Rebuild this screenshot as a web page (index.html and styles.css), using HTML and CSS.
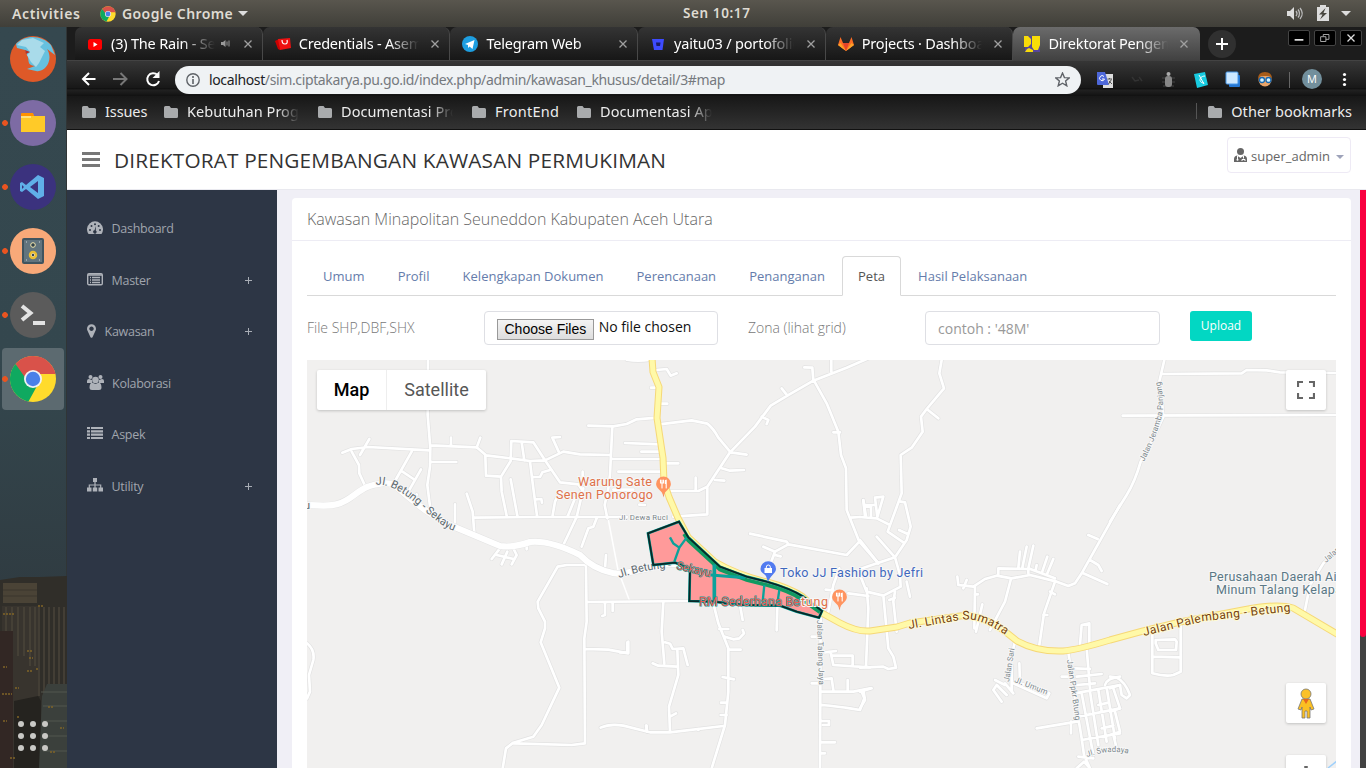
FILE: index.html
```html
<!DOCTYPE html>
<html lang="id">
<head>
<meta charset="utf-8">
<title>Direktorat Pengembangan Kawasan Permukiman</title>
<link rel="stylesheet" href="styles.css">
</head>
<body>
<svg width="0" height="0" class="sprite">
  <defs>
    <symbol id="chrome" viewBox="0 0 48 48"><circle cx="24" cy="24" r="23" fill="#ffdb2c"/><path d="M6.5 9A23 23 0 0 1 46.5 19H24L15 27Z" fill="#d9524a"/><path d="M6.5 9A23 23 0 0 0 19.5 46.5L28 31L20 28Z" fill="#0fa960"/><circle cx="24" cy="24" r="9" fill="#f2f2f2"/><circle cx="24" cy="24" r="7.2" fill="#4a80e8"/></symbol>
    <symbol id="folder" viewBox="0 0 14 12"><path d="M1.5 0H5.5L7 2H12.5Q14 2 14 3.5V10.5Q14 12 12.5 12H1.5Q0 12 0 10.5V1.5Q0 0 1.5 0Z" fill="#a9abad"/></symbol>
    <symbol id="close" viewBox="0 0 8 8"><path d="M.5 .5L7.5 7.5M7.5 .5L.5 7.5" stroke="#a0a0a0" stroke-width="1.3"/></symbol>
    <symbol id="food" viewBox="0 0 16 22"><path d="M8 21.5L6.2 14H9.8Z" fill="#e98b63"/><path d="M8 .5A7.4 7.4 0 0 1 15.4 8C15.4 12.5 10 14 8 19.5C6 14 .6 12.5 .6 8A7.4 7.4 0 0 1 8 .5Z" fill="#ff9460"/><path d="M5 4V7M6.5 4V12M8 4V7M5 7H8M10.7 4V12M10.8 4.5H9.8V7.5" stroke="#fff" stroke-width="1.1" fill="none"/></symbol>
  </defs>
</svg>
<header class="topbar">
  <span class="activities">Activities</span>
  <svg class="app-icon"><use href="#chrome"/></svg>
  <span class="app-name">Google Chrome</span><i class="caret light"></i>
  <span class="clock">Sen 10:17</span>
  <svg class="status" viewBox="0 0 66 18"><path d="M0 6H3L7 2V15L3 11H0Z" fill="#ddd"/><path d="M9 6Q11 8.500 9 11M11 4.500Q14 8.500 11 12.500M13 3Q17.500 8.500 13 14" fill="none" stroke="#bbb" stroke-width="1.3"/><path d="M30 2H33V0H39V2H42V16H30Z" fill="#ddd"/><path d="M38.500 3L32 9.500H35.500L33 14.500L40 8H36.500Z" fill="#48463f"/><path d="M54 6H64L59 11Z" fill="#ddd"/></svg>
</header>
<div class="desktop">
  <aside class="dock">
    <svg class="city" viewBox="0 0 67 192"><path d="M0 4L20 1H40L67 0V192H0Z" fill="#302e29"/><path d="M3 7H37V27H3Z" fill="#4a4336"/><path d="M3 14H37M3 20H37" stroke="#3b362c"/><path d="M2 30H38V192H2Z" fill="#38342e"/><path d="M39 31V120M44 31V120M49 31V120M54 31V120M59 31V110M64 31V110M6 31V55M12 31V55M18 31V80M24 31V80M30 31V90M35 31V90" stroke="#49443a" stroke-width="1.500"/><path d="M0 55L13 55V192H0Z" fill="#322724"/><path d="M14 125L38 120L41 125V192H14Z" fill="#25231f"/><path d="M42 120L47 108H67V192H39Z" fill="#3b403c"/><path d="M41 116H67M43 130H67M43 145H67M43 160H67M43 175H67" stroke="#52564e"/><path d="M3 38h12M2 118h10M3 91h4M27 75h5M29 82h4M36 93h3M15 112h4M17 141h2M48 131h6M60 152h4M27 95h5M50 176h6M10 182h6M3 145h4M38 30h6" stroke="#806427" stroke-width="1.500" stroke-dasharray="2 1"/></svg>
    <div class="launchers">
      <svg viewBox="0 0 48 48"><circle cx="24" cy="24" r="23" fill="#de5928"/><path d="M7 9C17-2 34 1 42 10L46 20L38 14C45 25 36 38 27 36L18 34L26 31C17 30 21 25 18 20L16 15L8 13Z" fill="#66c1df"/><path d="M13 5L24 3L35 8L31 12L36 16L30 28L27 32L22 27L18 20L21 17L17 12L8 10Z" fill="#a9dbea"/><path d="M16 15l5 2-4 2z" fill="#b63127"/></svg>
      <svg viewBox="0 0 48 48"><circle cx="24" cy="24" r="23" fill="#7d6ba4"/><path d="M12 15H24L25 17H36V33H12Z" fill="#ffca28"/><path d="M12 17V15Q12 14 13 14H24L25 17Z" fill="#ff9100"/><path d="M12 18H22" stroke="#fff6cf"/></svg>
      <svg viewBox="0 0 48 48"><circle cx="24" cy="24" r="23" fill="#3b327e"/><path fill-rule="evenodd" d="M29 12L35 15V33L29 36L17 26L13 29L11 28V20L13 19L17 22ZM29 18L21 24L29 30ZM13 22V26L15 24Z" fill="#60afe8"/></svg>
      <svg viewBox="0 0 48 48"><circle cx="24" cy="24" r="23" fill="#f8a979"/><rect x="13" y="11" width="22" height="26" rx="2" fill="#40545f"/><rect x="15" y="13" width="18" height="22" fill="#62747e"/><circle cx="24" cy="18" r="2.300" fill="#30414b" stroke="#f6e9b0"/><circle cx="24" cy="28" r="3" fill="#eee" stroke="#e9bd32" stroke-width="2.500"/><circle cx="24" cy="28" r="1.200" fill="#345"/><path d="M17 15h1M30 15h1M17 33h1M30 33h1" stroke="#ccd4d8"/></svg>
      <svg viewBox="0 0 48 48"><circle cx="24" cy="24" r="23" fill="#5b5b5b"/><path d="M13 15L21.500 22L13 29" fill="none" stroke="#e3e3e3" stroke-width="4"/><path d="M24 32H36" stroke="#e3e3e3" stroke-width="4"/></svg>
      <svg class="current"><use href="#chrome"/></svg>
    </div>
    <svg class="apps" viewBox="0 0 30 30"><g fill="#c9c8c5"><circle cx="3" cy="3" r="3"/><circle cx="15" cy="3" r="3"/><circle cx="27" cy="3" r="3"/><circle cx="3" cy="15" r="3"/><circle cx="15" cy="15" r="3"/><circle cx="27" cy="15" r="3"/><circle cx="3" cy="27" r="3"/><circle cx="15" cy="27" r="3"/><circle cx="27" cy="27" r="3"/></g></svg>
  </aside>
  <div class="browser">
    <div class="tabs">
      <div class="tab first"><svg viewBox="0 0 16 16"><rect x="1" y="3" width="14" height="11" rx="2.500" fill="#f00"/><path d="M6.500 6L10.500 8.500L6.500 11Z" fill="#fff"/></svg><span class="short">(3) The Rain - Seven</span><svg class="sound" viewBox="0 0 10 8"><path d="M0 2.500H2L4.500 .500V7.500L2 5.500H0Z" fill="#999"/><path d="M6 2V6M8 1V7" stroke="#999"/></svg><svg class="x"><use href="#close"/></svg></div>
      <div class="tab"><svg viewBox="0 0 16 16"><path d="M0 5L4 3L5 14L3 13Z" fill="#c00"/><path d="M3 3L15 2L16 12L5 14Z" fill="#e11"/><path d="M7 4Q7 8 10 8T12 4" fill="none" stroke="#fff" stroke-width="1.200"/></svg><span>Credentials - Asemka</span><svg class="x"><use href="#close"/></svg></div>
      <div class="tab"><svg viewBox="0 0 16 16"><circle cx="8" cy="8" r="8" fill="#1e9ee0"/><path d="M3 8L12.500 4L10.500 13L7.500 10.500L6 12V9Z" fill="#fff"/></svg><span>Telegram Web</span><svg class="x"><use href="#close"/></svg></div>
      <div class="tab"><svg viewBox="0 0 16 16"><path d="M2 3H14L12.500 14H4Z" fill="#3d4bff"/><path d="M6 6.500H10.500L10 10H6.500Z" fill="#1b1c66"/></svg><span>yaitu03 / portofolio</span><svg class="x"><use href="#close"/></svg></div>
      <div class="tab"><svg viewBox="0 0 16 16"><path d="M8 15L0 9L2.500 1L5 7H11L13.500 1L16 9Z" fill="#fc6d26"/><path d="M8 15L5 7H11Z" fill="#e24329"/><path d="M0 9L2.500 7L8 15Z M16 9L13.500 7L8 15Z" fill="#fca326"/></svg><span>Projects · Dashboard</span><svg class="x"><use href="#close"/></svg></div>
      <div class="tab active"><svg viewBox="0 0 16 16"><path d="M0 0H16V16H1V11H0Z" fill="#56469a"/><path d="M0 0H4L7 3V8L4 11H0ZM8 0H16V9L14 14H10L8 11ZM1 16L3 13L5 12L9 14V16Z" fill="#f8dc09"/></svg><span>Direktorat Pengembangan</span><svg class="x"><use href="#close"/></svg></div>
      <span class="plus-tab"><svg viewBox="0 0 12 12"><path d="M6 0V12M0 6H12" stroke="#fff" stroke-width="2"/></svg></span>
      <div class="win-buttons">
        <svg viewBox="0 0 22 16"><path d="M6 10H16" stroke="#ddd" stroke-width="2"/></svg>
        <svg viewBox="0 0 22 16"><path d="M6 6.500H12V12H6ZM9 6V4H15.500V9.500H12" fill="none" stroke="#bbb"/></svg>
        <svg viewBox="0 0 22 16"><path d="M7 4L15 12M15 4L7 12" stroke="#ddd" stroke-width="1.500"/></svg>
      </div>
    </div>
    <div class="toolbar">
      <svg class="nav" viewBox="0 0 80 16"><path d="M14.500 8H2M8 2L2 8L8 14" fill="none" stroke="#fff" stroke-width="2"/><path d="M32 8H45M39.500 2L45.500 8L39.500 14" fill="none" stroke="#777" stroke-width="2"/><path d="M76.500 4A6 6 0 1 0 78 10" fill="none" stroke="#fff" stroke-width="2"/><path d="M78.500 0V7H71.500Z" fill="#fff"/></svg>
      <div class="address">
        <svg class="info" viewBox="0 0 14 14"><circle cx="7" cy="7" r="6.200" fill="none" stroke="#5f6368" stroke-width="1.400"/><path d="M7 3V5M7 6V11" stroke="#5f6368" stroke-width="1.600"/></svg>
        <span class="url"><b>localhost</b>/sim.ciptakarya.pu.go.id/index.php/admin/kawasan_khusus/detail/3#map</span>
        <svg class="star" viewBox="0 0 14 14"><path d="M7 1L8.800 5.200L13.300 5.500L9.900 8.400L11 12.900L7 10.500L3 12.900L4.100 8.400L.700 5.500L5.200 5.200Z" fill="none" stroke="#5f6368" stroke-width="1.300"/></svg>
      </div>
      <svg class="extensions" viewBox="0 0 270 24"><rect x="9" y="6" width="10" height="14" fill="#ddd"/><path d="M3 4H11L15 17H4Q3 17 3 16Z" fill="#4d67d9"/><path d="M10 8.500A2.500 2.500 0 1 0 10.500 11H8" stroke="#fff" fill="none"/><path d="M13.500 11H18M15.500 10V11M14.500 16L17.500 11.500M15 13L18 16" stroke="#555" fill="none"/><path d="M38 9L41 13L45 12M45 9L48 13" stroke="#333" stroke-width="1.500" fill="none"/><path d="M68 10L81 10M68 14H81M69 18L80 18" stroke="#444"/><rect x="71" y="8" width="7" height="11" rx="3" fill="#888"/><circle cx="74.500" cy="6" r="2" fill="#aaa"/><path d="M100 6L111 4L114 17L103 20Z" fill="#18cbe0"/><path d="M105 7L110 16M111 8C105 8 104 15 110 15" stroke="#fff" fill="none"/><rect x="135" y="7" width="11" height="12" rx="1" fill="#2477d4"/><rect x="132" y="4" width="12" height="12" rx="1" fill="#cde8ff" stroke="#4998e8"/><circle cx="171" cy="12" r="6.500" fill="#e9a468"/><path d="M164 11Q164 4 171 4T178 11L175 8H167Z" fill="#a85c19"/><circle cx="168" cy="12" r="2.500" fill="#d6f4ff" stroke="#1769b2" stroke-width="1.300"/><circle cx="174.500" cy="12" r="2.500" fill="#d6f4ff" stroke="#1769b2" stroke-width="1.300"/><path d="M195.500 4V20" stroke="#666"/><circle cx="218" cy="11" r="10" fill="#728f9c"/><text x="218" y="15" text-anchor="middle" fill="#fff" font-size="11">M</text><g fill="#fff"><circle cx="250.500" cy="6.500" r="1.600"/><circle cx="250.500" cy="11.500" r="1.600"/><circle cx="250.500" cy="16.500" r="1.600"/></g></svg>
    </div>
    <div class="bookmarks">
      <div class="bm b1"><svg><use href="#folder"/></svg><span>Issues</span></div>
      <div class="bm b2"><svg><use href="#folder"/></svg><span class="fade">Kebutuhan Program</span></div>
      <div class="bm b3"><svg><use href="#folder"/></svg><span class="fade">Documentasi Project</span></div>
      <div class="bm b4"><svg><use href="#folder"/></svg><span>FrontEnd</span></div>
      <div class="bm b5"><svg><use href="#folder"/></svg><span class="fade">Documentasi Apps</span></div>
      <div class="bm other"><svg><use href="#folder"/></svg><span>Other bookmarks</span></div>
    </div>
    <div class="page">
      <div class="header">
        <svg class="burger" viewBox="0 0 18 15"><path d="M0 1.500H18M0 7.500H18M0 13.500H18" stroke="#777" stroke-width="2.800"/></svg>
        <h1>DIREKTORAT PENGEMBANGAN KAWASAN PERMUKIMAN</h1>
        <div class="user"><svg viewBox="0 0 13 14"><circle cx="6.500" cy="3.500" r="3.500" fill="#666"/><path d="M0 14V11Q0 8 3 7.500L6.500 10L10 7.500Q13 8 13 11V14Z" fill="#666"/><path d="M3.500 8V11M9.500 8V10.500M8 13V11.500H11V13" stroke="#fff" fill="none"/><circle cx="3.500" cy="11.700" r="1" fill="#fff"/></svg><span>super_admin</span><i class="caret"></i></div>
      </div>
      <div class="main">
        <nav class="sidebar">
          <div class="item"><svg viewBox="0 0 16 14"><path d="M1.500 13A8 8 0 1 1 14.500 13Z" fill="#aeb2b9"/><g fill="#2d3645"><circle cx="3" cy="9" r="1"/><circle cx="4.500" cy="5" r="1"/><circle cx="8" cy="3.300" r="1"/><circle cx="11.700" cy="5" r="1"/><circle cx="13" cy="9" r="1"/><path d="M9 5L8.800 9.500A1.700 1.700 0 1 1 7.500 9.300Z"/></g></svg><span>Dashboard</span></div>
          <div class="item"><svg viewBox="0 0 16 14"><rect x=".700" y="1.700" width="14.600" height="11" rx="1.200" fill="none" stroke="#aeb2b9" stroke-width="1.400"/><path d="M1 3H15M3 5.500H4M5 5.500H13M3 8H4M5 8H13M3 10.500H4M5 10.500H13" stroke="#aeb2b9" stroke-width="1.300"/></svg><span>Master</span><i class="plus"></i></div>
          <div class="item pin"><svg viewBox="384 128 1024 1536"><path fill="#aeb2b9" d="M1152 640q0-106-75-181t-181-75-181 75-75 181 75 181 181 75 181-75 75-181zm256 0q0 109-33 179l-364 774q-16 33-47.500 52t-67.500 19-67.500-19-46.500-52l-365-774q-33-70-33-179 0-212 150-362t362-150 362 150 150 362z"/></svg><span>Kawasan</span><i class="plus"></i></div>
          <div class="item wide"><svg viewBox="0 0 17 15"><g fill="#aeb2b9"><circle cx="3.500" cy="2" r="2"/><circle cx="13.500" cy="2" r="2"/><path d="M0 8V6Q0 4 2 4L5 5L5 8ZM17 8V6Q17 4 15 4L12 5V8Z"/><circle cx="8.500" cy="5" r="3.300"/><path d="M2.500 13Q2.500 8 5 7.500L8.500 9L12 7.500Q14.500 8 14.500 13Q14.500 15 12 15H5Q2.500 15 2.500 13Z"/></g></svg><span>Kolaborasi</span></div>
          <div class="item"><svg viewBox="0 0 16 14"><path d="M0 1H3M4 1H16M0 4.300H3M4 4.300H16M0 7.600H3M4 7.600H16M0 11H3M4 11H16" stroke="#aeb2b9" stroke-width="2.200"/></svg><span>Aspek</span></div>
          <div class="item"><svg viewBox="0 0 16 14"><path d="M6 0H10V4H6ZM0 9.500H4.500V13.500H0ZM5.800 9.500H10.200V13.500H5.800ZM11.500 9.500H16V13.500H11.500Z" fill="#aeb2b9"/><path d="M8 4V10M2.300 10V7H13.700V10" stroke="#aeb2b9" stroke-width="1.200" fill="none"/></svg><span>Utility</span><i class="plus"></i></div>
        </nav>
        <main class="content">
          <section class="panel">
            <h2>Kawasan Minapolitan Seuneddon Kabupaten Aceh Utara</h2>
            <div class="panel-body">
              <div class="nav-tabs"><a>Umum</a><a>Profil</a><a>Kelengkapan Dokumen</a><a>Perencanaan</a><a>Penanganan</a><a class="on">Peta</a><a>Hasil Pelaksanaan</a></div>
              <div class="form">
                <label>File SHP,DBF,SHX</label>
                <div class="field file"><span class="choose">Choose Files</span><span class="none">No file chosen</span></div>
                <label>Zona (lihat grid)</label>
                <div class="field hint">contoh : '48M'</div>
                <div class="upload">Upload</div>
              </div>
              <div class="map">
                <svg class="canvas" viewBox="307 360 1029 408">
                  <defs>
                    <g id="minor">
                      <path transform="translate(300 355) scale(.33333)" d="M384 0L383 180L391 280L390 335L382 390L392 470M127 293L155 282L205 276L388 286M208 252L180 300M155 290L177 330L178 355L194 390M335 290L285 378M363 343L325 410M303 347L345 375M391 271L530 277L558 301L632 310L690 318L735 316L790 290L840 298L930 300M453 248V270M541 248L530 278M391 321H469M556 301L558 362L603 365L632 318L634 258L700 262L735 316L780 382L835 388L850 410M665 262L673 316M780 246L757 248L776 290M690 320L700 400L711 482M700 366L720 366L727 352L748 346M632 373L652 482M603 366L605 410L620 482M708 433L724 432L726 443M848 350V385M520 488L700 486L980 486M500 416L518 470L523 535M465 448V505M350 418L345 440M780 410L765 440L758 480M825 430L803 484M850 400L830 486L790 570M890 490L880 515L865 520L845 575M865 212L940 214L980 207L1010 193L1072 188M937 214L930 360L925 400L914 450L922 490M932 312H1090M975 264L1080 268M955 350H1090M1024 290H1080M940 404H1000M1018 449L1035 450M918 600L915 640M600 580L575 612M590 600L640 612M622 590L605 628M640 580L650 600L635 628M680 570V583M860 630L800 630L773 635L713 740L715 760L735 800L735 820L722 862L778 998L725 1110L700 1145L640 1163L618 1180L608 1240M858 630L860 800L853 850L855 1165L815 1170L640 1165M860 741L1170 738M915 741V780L907 783M938 741V768M857 882L925 884L985 895V860M21 865Q45 885 40 915L27 960L30 1010L21 1030M902 1118Q930 1105 970 1112L1050 1132L1110 1132L1270 1113M1040 1112V1130M980 14Q1015 20 1050 14"/>
                      <path transform="translate(620 355) scale(.33333)" d="M110 45L140 42L152 62L170 55M93 98H108M115 146H142M118 208L215 196L262 206Q280 220 295 248L332 292L380 299M135 408H235L262 395L330 292L405 215L452 152L502 122L580 77L680 38L745 10M485 100L502 122M553 37L577 38L580 77M634 15V50M582 77L620 145L655 230L663 300L678 340L680 465L718 560L775 625M640 232H660M425 185L445 195L440 207M305 340L330 347L372 345M285 375L313 377M227 368V405M262 395V478L160 485M135 325H175M390 536L500 560L505 568L680 600L718 560M430 575L465 590L505 568M465 590L450 630M465 600L482 604M692 488L720 486M730 436L735 484M735 455H750M658 640L640 690L625 770M617 704L640 706M685 715L745 723M130 740L125 830L133 925M135 862L150 866L158 882L190 880L203 930M98 925L115 932L172 935M172 885L175 960L147 1055L150 1130M150 1085L168 1075M0 892L22 893V862M280 745L295 805L325 880L325 1010L315 1110L275 1240M298 822H325M315 845L340 853L358 850L372 835L368 825M330 884H362M308 966L342 973M303 1043H320M302 1080H320M360 750L368 795M472 755L470 826M602 790L600 1240M575 985H603M575 845H600M615 892L648 888M632 892L640 930L750 937M637 902H698V930M605 1010L700 1010L750 1000M610 972L635 970L640 1005M683 975V1008M605 1050Q660 1055 690 1060L720 1065L733 1030L725 1010M605 1098H627V1110H609M605 1162H645M600 1195H615M78 1112L82 1130M235 1122V1125"/>
                      <path transform="translate(860 355) scale(.33333)" d="M245 15L238 55L252 100L200 162L183 185L188 230L155 278L122 300L125 415L83 530L130 562M200 162L235 190M122 440L135 442L152 515L140 555L105 607L0 642M117 525L143 537M0 486L50 490L90 510M10 435L18 484M15 450H45M52 486L45 428L70 425L52 486M33 450V484M0 555L55 625M50 545L105 607L120 660L122 695L70 722L20 710L0 660M140 680L150 725M20 700L25 760L18 935M70 722L85 880L100 905L108 938L85 942L70 935L0 938M105 710L100 740L110 830M88 735L105 728M0 1010L35 1000M10 1005L15 1035L0 1060M292 665L295 690L340 695L375 672L410 662L455 670L510 660L590 680L625 693L645 685L665 655L780 450M345 695L343 820M310 700L320 675M344 718H354M367 748L348 830M452 675L435 740L390 825M415 660V640L505 642V655M475 638L480 590M487 638L500 575M505 640L520 572M527 645L530 630M545 655L562 605M560 660L580 612M505 640L585 670M585 680L552 775L538 870M570 710L585 718M550 780H562M685 540L713 552M690 615L715 630L725 648M670 655L742 687M465 860L455 900M478 925L480 985M405 975L435 990M460 985L560 1030L568 1015L480 985M455 930V1010M425 1040L400 1005L410 990L440 1020M435 985L460 1015M660 868L665 810L688 805V870M680 880L690 1000M625 890L640 1000L665 1150L672 1200L690 1240M605 965H640M645 940L690 942M650 965L725 957M650 990L705 985M645 1015L780 990M655 1085L780 1060M665 1155L780 1135M665 1015L700 1200M690 1010L715 1170M715 1005L740 1160M740 998L765 1150M715 1050L745 1043M725 1120L760 1112M530 1120L650 1100M633 1100V1135M655 1205L700 1210M650 1240L672 1220L690 1240M735 990Q740 970 780 965"/>
                      <path transform="translate(1110 355) scale(.33333)" d="M163 15L148 80L155 130L160 185L130 250L92 320Q75 380 50 420L0 500M155 57L395 55L410 45L470 46L510 52L680 54M38 182L680 180M680 590L640 625L600 690L585 765M127 820V955Q165 965 190 960L212 950V810M130 905L208 907M137 855L195 853L200 860L198 885H145L137 865ZM0 965L20 968Q45 980 60 1020L50 1030L35 1020L30 990M0 1000L30 990M10 1000L30 1060L0 1070M15 1070L30 1130L0 1140M10 1140L20 1180"/>
                    </g>
                    <path id="major" d="M307 505C327 506 337 507 350 498S364 486 384 483L393 484C410 498 427 515 457 528L500 546Q513 548 530 542Q550 540 580 555Q593 569 613 573L620 574L650 568Q675 560 690 568L712 578"/>
                    <path id="trunk" d="M652 358L653 372L659 387L657 418L663 458L664 482L669 497L678 518L688 537L715 562Q737 575 767 582Q790 588 803 597L820 612L840 623Q857 632 870 631L897 627L910 623L960 616Q980 613 1007 633L1017 641Q1037 652 1063 651Q1077 650 1110 640L1143 631L1180 622L1243 610Q1277 603 1293 608L1337 634"/>
                    <path id="l1" d="M376 485Q392 482 420 507T457 531"/>
                    <path id="l2" d="M619 578Q655 566 680 569T713 580"/>
                    <path id="l3" d="M909 629L960 620Q980 616 1008 637"/>
                    <path id="l4" d="M1144 636L1205 621L1293 611"/>
                    <path id="l5" d="M1144 462Q1163 423 1163 406T1159 378"/>
                    <path id="l6" d="M1009 682L1015 646"/>
                    <path id="l7" d="M1014 682L1050 696"/>
                    <path id="l8" d="M1067 660L1076 724"/>
                    <path id="l9" d="M817 620L819 688"/>
                    <path id="l10" d="M1087 757Q1110 749 1130 754"/>
                    <path id="l11" d="M1326 563L1350 542"/>
                  </defs>
                  <rect x="307" y="360" width="1029" height="408" fill="#f1f0ef"/>
                  <path d="M608 518L618 570L630 602" stroke="#fff" stroke-width="1.500" fill="none"/>
                  <use href="#minor" class="minor-case"/><use href="#minor" class="minor-road"/>
                  <use href="#major" class="major-case"/><use href="#major" class="major-road"/>
                  <use href="#trunk" class="trunk-case"/><use href="#trunk" class="trunk-road"/>
                  <path d="M1328 768L1337 761" stroke="#9fd0fb" stroke-width="1.500"/>
                  <g class="roadname"><text font-size="11"><textPath href="#l1" textLength="92">Jl. Betung - Sekayu</textPath></text><text font-size="11"><textPath href="#l2" textLength="53">Jl. Betung -</textPath></text><text x="304" y="509" font-size="11">u</text></g>
                  <g transform="translate(620 355) scale(.33333)">
                    <path d="M177 500L84 535L100 630L165 623L210 640L208 738L280 740L370 750L480 752L530 770L597 788L606 768L550 725Q510 700 440 680L380 665L300 635L205 547Z" fill="#ff9a9a" stroke="#009f98" stroke-width="8"/>
                    <path d="M192 537L205 557L300 644L380 675L440 690Q510 708 548 735L600 772" fill="none" stroke="#119a61" stroke-width="11"/>
                    <g fill="none" stroke="#0ba29b"><path d="M150 547L160 565L178 578M200 548L178 578L163 620M433 690L428 740M478 705L472 745" stroke-width="7"/><path d="M283 628V740" stroke-width="11"/><path d="M273 660L375 668" stroke-width="9"/></g>
                    <path d="M177 500L84 535L100 630L165 623L210 640L208 738L280 740L370 750L480 752L530 770L597 788L606 768L550 725Q510 700 440 680L380 665L300 635L205 547Z" fill="none" stroke="#082827" stroke-width="5.500"/>
                  </g>
                  <g class="covered"><text x="676" y="569" textLength="35" transform="rotate(13 676 569)">Sekayu</text><text x="699" y="606" font-size="12.500" textLength="101">RM Sederhana Be</text></g>
                  <g class="poi food"><text x="801" y="606" textLength="27">tung</text><text x="578" y="486" textLength="74">Warung Sate</text><text x="556" y="499" textLength="97">Senen Ponorogo</text></g>
                  <text class="poi" x="780" y="577" textLength="143" fill="#3f67bd">Toko JJ Fashion by Jefri</text>
                  <g class="poi" fill="#5b7885"><text x="1209" y="581" textLength="132">Perusahaan Daerah Air</text><text x="1216" y="594" textLength="126">Minum Talang Kelapa</text></g>
                  <g class="roadname small"><text x="619" y="520" textLength="49">Jl. Dewa Ruci</text><text><textPath href="#l5" textLength="84">Jalan Jeramba Panjang</textPath></text><text><textPath href="#l6" textLength="34">Jalan Sari</textPath></text><text><textPath href="#l7" textLength="35">Jl. Umum</textPath></text><text><textPath href="#l8" textLength="61">Jalan Ppkr Btung</textPath></text><text><textPath href="#l9" textLength="65">Jalan Talang Jaya</textPath></text><text><textPath href="#l10" textLength="42">Jl. Swadaya</textPath></text><text><textPath href="#l11">Jalan</textPath></text></g>
                  <g class="roadname brown"><text><textPath href="#l3" textLength="101">Jl. Lintas Sumatra</textPath></text><text><textPath href="#l4" textLength="149">Jalan Palembang - Betung</textPath></text></g>
                  <use href="#food" x="655.500" y="476" width="16" height="22"/><use href="#food" x="831.500" y="589" width="16" height="22"/>
                  <path d="M768 582L766 576C764 573 760.500 573 760.500 569A7.700 7.700 0 1 1 776 569C776 573 770 576 768 582Z" fill="#527bf0"/><path d="M764.500 568H772V573H764.500Z" fill="#fff"/><path d="M766.300 569V567A2 2 0 0 1 770.300 567V569" fill="none" stroke="#fff"/>
                </svg>
                <div class="types"><span class="sel">Map</span><span>Satellite</span></div>
                <div class="control full"><svg viewBox="0 0 18 18"><path d="M1 6V1H6M12 1H17V6M17 12V17H12M6 17H1V12" fill="none" stroke="#666" stroke-width="2.200"/></svg></div>
                <div class="control man"><svg viewBox="0 0 18 31"><path d="M5 11H13L17 21L14 22L13 19V30H10V23H8V30H5V19L4 22L1 21Z" fill="#fbbf22" stroke="#777" stroke-width=".800"/><circle cx="9" cy="6" r="5" fill="#fbc12a" stroke="#777" stroke-width=".800"/><path d="M6 11H12L9 16Z" fill="#e7671f"/></svg></div>
                <div class="control zoom"><svg viewBox="0 0 18 18"><path d="M9 0V18M0 9H18" stroke="#666" stroke-width="3.500"/></svg></div>
              </div>
            </div>
          </section>
        </main>
        <div class="scroll"><i></i></div>
      </div>
    </div>
  </div>
</div>
</body>
</html>
```
FILE: styles.css
```css
* { box-sizing: border-box; }
body { margin: 0; width: 1366px; height: 768px; overflow: hidden; font-family: "Open Sans", "Noto Sans", sans-serif; background: #fff; }
svg { display: block; flex: none; }
i { font-style: normal; }
.sprite { position: absolute; }
.topbar { height: 27px; display: flex; align-items: center; background: linear-gradient(#59564e, #403f39); color: #dfdbd2; font: 600 14px/27px "Noto Sans", sans-serif; padding: 0 13px 0 12px; letter-spacing: .4px; }
.activities { width: 88px; letter-spacing: .6px; }
.app-icon { width: 16px; height: 16px; margin-right: 6px; }
.app-name { width: 111px; white-space: nowrap; }
.caret { border: 4px solid transparent; border-top-color: #9ea3ba; border-bottom: 0; }
.caret.light { border-width: 5px 5px 0; border-top-color: #ddd; margin-left: 5px; }
.clock { margin-left: 435px; font-size: 13.5px; letter-spacing: .6px; }
.status { width: 66px; height: 18px; margin-left: auto; }
.desktop { height: 741px; display: flex; }
.dock { width: 67px; background: linear-gradient(#35484f, #34474e 45%, #303c42 75%); border-right: 1px solid #303536; position: relative; flex: none; }
.city { position: absolute; left: 0; bottom: 0; width: 67px; height: 192px; }
.launchers { display: flex; flex-direction: column; gap: 2px; padding: 1px 2px; }
.launchers svg { width: 62px; height: 62px; padding: 7px; border-radius: 4px; background: radial-gradient(circle at 3px 31px, #e95420 2.5px, transparent 3.2px); }
.launchers svg:first-child { background: none; }
.launchers .current { background: radial-gradient(circle at 3px 31px, #e95420 2.5px, transparent 3.2px), #5c6a70; }
.apps { position: absolute; left: 18px; top: 694px; width: 30px; height: 30px; }
.browser { width: 1299px; background: #222; }
.tabs { height: 34px; background: #1c1c1c; border-bottom: 1px solid #434343; display: flex; padding-left: 8px; font: 14.5px "Noto Sans", sans-serif; color: #fff; }
.tab { width: 187.7px; display: flex; align-items: center; padding: 0 10px 0 12px; background: linear-gradient(#343434, #171717); border-right: 1px solid #484848; border-radius: 7px 7px 0 0; }
.tab > svg { width: 16px; height: 16px; }
.tab > span { width: 120px; overflow: hidden; white-space: nowrap; margin: -2px 0 0 8px; letter-spacing: -.2px; -webkit-mask-image: linear-gradient(90deg, #000 75%, transparent); }
.tab > span.short { width: 104px; -webkit-mask-image: linear-gradient(90deg, #000 68%, transparent); }
.tab .sound { width: 10px; height: 9px; margin-left: 6px; }
.tab .x { width: 8px; height: 8px; margin-left: auto; }
.tab.active { background: linear-gradient(#6b6b6b, #404040); border: 0; height: 34px; width: 187px; padding: 0 12px 0 11px; }
.plus-tab { width: 28px; height: 28px; margin: 3px 0 0 8px; border-radius: 50%; background: #303030; display: grid; place-items: center; }
.plus-tab svg { width: 12px; height: 12px; }
.win-buttons { display: flex; gap: 4px; margin: 3px 0 0 auto; padding-right: 4px; }
.win-buttons svg { width: 22px; height: 16px; background: #000; border: 1px solid #444; border-radius: 2px; }
.toolbar { height: 35px; display: flex; align-items: center; background: linear-gradient(#363636, #171717 78%, #050505 80%, #222 82%, #111); padding: 4px 0 2px 14px; }
.nav { width: 80px; height: 16px; margin-top: -2px; }
.address { height: 28px; width: 906px; margin-left: 14px; border-radius: 14px; background: #eff2f4; display: flex; align-items: center; padding: 0 11px; font: 14px "Noto Sans", sans-serif; color: #75797e; letter-spacing: -.37px; }
.address b { color: #202124; font-weight: 400; }
.info { width: 14px; height: 14px; margin-right: 9px; }
.star { width: 15px; height: 15px; margin-left: auto; }
.extensions { width: 270px; height: 24px; margin-left: 13px; }
.bookmarks { height: 34px; background: linear-gradient(#171717, #333); border-bottom: 1px solid #111; display: flex; align-items: center; padding: 0 14px 3px 15px; color: #ececec; font: 14.5px "Noto Sans", sans-serif; }
.bm { display: flex; align-items: center; gap: 9px; white-space: nowrap; letter-spacing: .05px; }
.bm svg { width: 14px; height: 12px; margin-top: 1px; }
.b1 { width: 82px; letter-spacing: -.1px; } .b2 { width: 154px; } .b3 { width: 154px; } .b4 { width: 105px; letter-spacing: .25px; } .b5 { width: 145px; }
.fade { width: 112px; overflow: hidden; -webkit-mask-image: linear-gradient(90deg, #000 80%, transparent); }
.other { margin-left: auto; border-left: 1px solid #555; padding-left: 11px; height: 16px; }
.page { height: 638px; background: #f0eff6; }
.header { height: 60px; background: #fff; border-bottom: 1px solid #e9e9ef; display: flex; padding: 0 15px; }
.burger { width: 18px; height: 15px; margin-top: 22px; }
h1 { margin: 16px 0 0 14px; font: 400 20.8px/28px "Open Sans", sans-serif; letter-spacing: .15px; color: #333; white-space: nowrap; }
.user { margin: 7px 0 0 auto; width: 124px; height: 36px; border: 1px solid #eeeaf5; border-radius: 4px; display: flex; align-items: center; padding: 0 6px; font-size: 13px; color: #666; }
.user svg { width: 13px; height: 14px; margin-right: 4px; }
.user span { margin-top: 2px; }
.user .caret { margin: 3px 0 0 auto; }
.main { display: flex; height: 578px; }
.sidebar { width: 210px; background: #2d3645; padding-top: 13px; flex: none; }
.item { height: 51.5px; display: flex; align-items: center; padding: 0 25px 0 20px; color: #a0a5ad; font-size: 12.5px; letter-spacing: -.27px; }
.item svg { width: 16px; height: 14px; margin: -2px 8.500px 0 0; }
.item.pin svg { width: 9px; height: 14px; }
.item.wide svg { width: 17px; height: 15px; margin-right: 8px; }
.plus { width: 7px; height: 7px; margin-left: auto; background: linear-gradient(#a8adb5, #a8adb5) center / 7px 1px no-repeat, linear-gradient(#a8adb5, #a8adb5) center / 1px 7px no-repeat; }
.content { width: 1083px; padding: 8px 9px 0 15px; }
.panel { background: #fff; border-radius: 4px 4px 0 0; height: 570px; }
h2 { margin: 0; height: 43px; border-bottom: 1px solid #edecf4; padding-left: 15px; font: 300 16px/42px "Open Sans", sans-serif; color: #666; }
.panel-body { padding: 15px 15px 0; }
.nav-tabs { height: 40px; display: flex; border-bottom: 1px solid #d9d9d9; font-size: 13px; line-height: 40px; color: #657cab; gap: 1.1px; }
.nav-tabs a { height: 40px; padding: 0 15px; border: 1px solid transparent; line-height: 39px; white-space: nowrap; }
.nav-tabs .on { background: #fff; color: #555; border-color: #d9d9d9 #d9d9d9 #fff; border-radius: 4px 4px 0 0; }
.form { margin-top: 15px; height: 49px; display: grid; grid-template-columns: 147px 234px 147px 235px 62px; column-gap: 30px; font-size: 14px; align-items: start; }
.form label { line-height: 34px; font-weight: 300; color: #777; white-space: nowrap; }
.field { height: 34px; border: 1px solid #dedfe4; border-radius: 4px; padding: 0 12px; line-height: 34px; color: #999; }
.file { display: flex; align-items: center; gap: 5px; color: #111; }
.choose { height: 21px; line-height: 18px; border: 1px solid #999; background: linear-gradient(#f4f4f4, #ddd); padding: 0 6.5px; font-family: "Liberation Sans", sans-serif; font-size: 14px; white-space: nowrap; margin-top: 2px; color: #000; }
.none { font-size: 14px; margin-top: -2px; white-space: nowrap; }
.upload { height: 30px; background: #02d7c3; color: #fff; font-size: 12px; line-height: 29px; border-radius: 3px; text-align: center; }
.map { position: relative; height: 408px; overflow: hidden; font-family: Roboto, sans-serif; }
.canvas { width: 1029px; height: 408px; font-family: Roboto, sans-serif; }
.canvas use { fill: none; stroke-linecap: round; stroke-linejoin: round; }
.minor-case { stroke: #e2e2e2; stroke-width: 12px; }
.minor-road { stroke: #fff; stroke-width: 8px; }
.major-case { stroke: #e3e3e3; stroke-width: 7px; }
.major-road { stroke: #fff; stroke-width: 6.2px; }
.trunk-case { stroke: #f6d877; stroke-width: 7px; }
.trunk-road { stroke: #fff9a8; stroke-width: 5px; }
.roadname { fill: #5c676d; stroke: #f7f7f7; stroke-width: 2px; paint-order: stroke; }
.covered { font-size: 11px; fill: #ee5a52; stroke: #129c99; stroke-width: 1.2px; paint-order: stroke; }
.small { fill: #7d878c; font-size: 8px; }
.brown { fill: #77420c; stroke: #fffad2; font-size: 12px; }
.poi { font-size: 12.5px; stroke: #f7f7f7; stroke-width: 2px; paint-order: stroke; }
.food { fill: #df7149; }
.types { position: absolute; left: 10px; top: 10px; height: 40px; width: 169px; display: flex; background: #fff; border-radius: 2px; box-shadow: 0 1px 3px #0003; font-size: 18px; line-height: 40px; color: #565656; }
.types span { flex: 1; text-align: center; }
.types .sel { flex: 0 0 70px; color: #000; font-weight: 500; border-right: 1px solid #eee; }
.control { position: absolute; left: 979px; width: 40px; height: 40px; background: #fff; border-radius: 2px; box-shadow: 0 1px 3px #0003; display: grid; place-items: center; }
.control svg { width: 18px; height: 18px; }
.full { top: 10px; } .man { top: 323px; } .zoom { top: 395px; }
.control.man svg { height: 31px; }
.scroll { width: 6px; background: #424242; }
.scroll i { display: block; height: 447px; background: #f9003f; border-radius: 0 0 3px 3px; }
```
